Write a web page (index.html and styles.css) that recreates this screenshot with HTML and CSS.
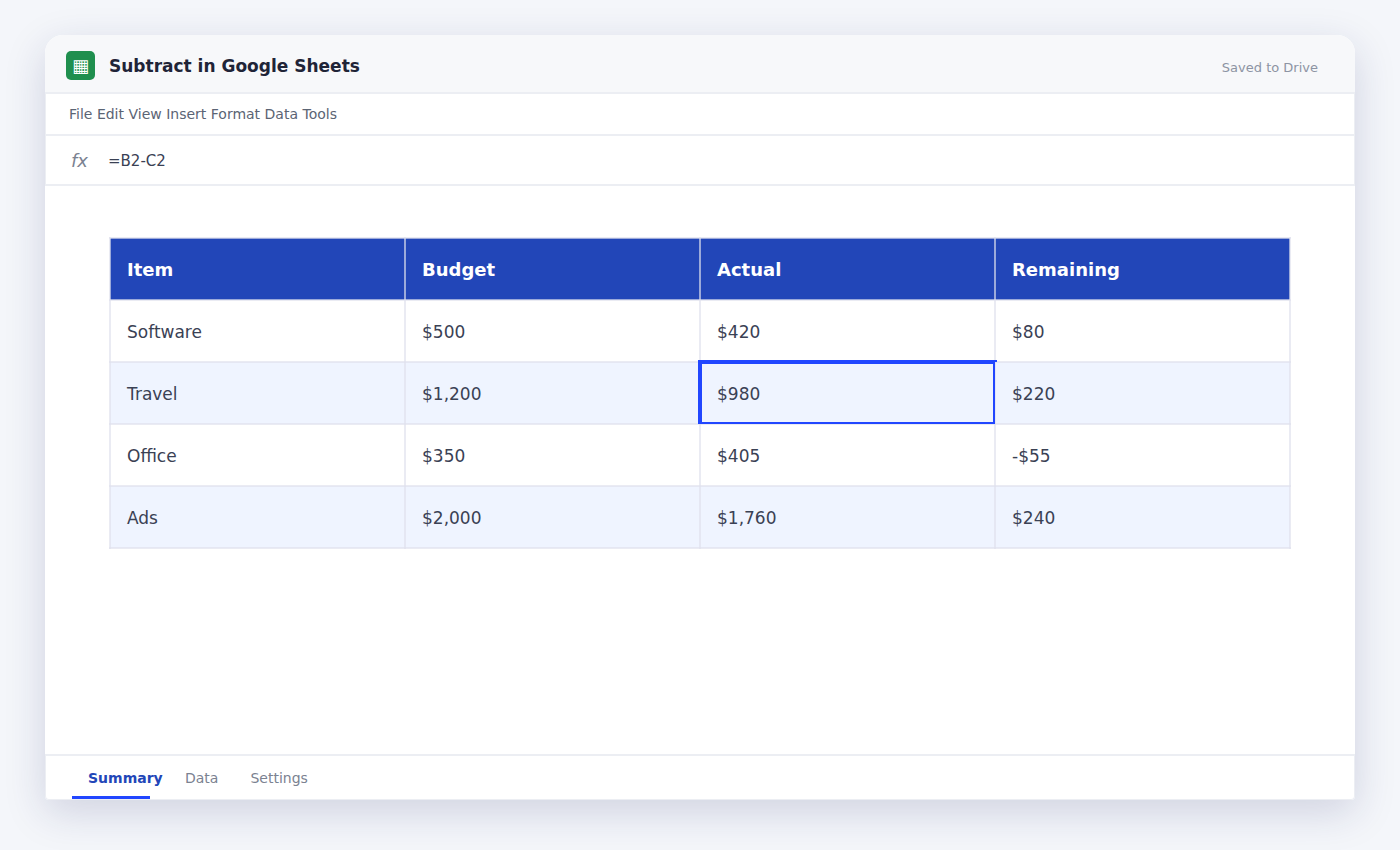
FILE: index.html
```html
<!DOCTYPE html>
<html lang="en">
<head>
    <meta charset="UTF-8">
    <meta name="viewport" content="width=device-width, initial-scale=1.0">
    <title>Subtract in Google Sheets</title>
    <link rel="stylesheet" href="styles.css">
</head>
<body>
    <div class="sheet-window">
        <!-- Title bar -->
        <header class="title-bar">
            <span class="app-icon" aria-hidden="true">▦</span>
            <h1>Subtract in Google Sheets</h1>
            <span class="save-status">Saved to Drive</span>
        </header>

        <nav class="menu-bar">
            <button>File</button>
            <button>Edit</button>
            <button>View</button>
            <button>Insert</button>
            <button>Format</button>
            <button>Data</button>
            <button>Tools</button>
        </nav>

        <div class="formula-bar">
            <label for="formula">fx</label>
            <input type="text" id="formula" value="=B2-C2">
        </div>

        <!-- Sheet -->
        <main class="sheet-content">
            <table class="sheet-table">
                <thead>
                    <tr>
                        <th>Item</th>
                        <th>Budget</th>
                        <th>Actual</th>
                        <th>Remaining</th>
                    </tr>
                </thead>
                <tbody>
                    <tr>
                        <td>Software</td>
                        <td>$500</td>
                        <td>$420</td>
                        <td>$80</td>
                    </tr>
                    <tr>
                        <td>Travel</td>
                        <td>$1,200</td>
                        <td class="selected">$980</td>
                        <td>$220</td>
                    </tr>
                    <tr>
                        <td>Office</td>
                        <td>$350</td>
                        <td>$405</td>
                        <td>-$55</td>
                    </tr>
                    <tr>
                        <td>Ads</td>
                        <td>$2,000</td>
                        <td>$1,760</td>
                        <td>$240</td>
                    </tr>
                </tbody>
            </table>
        </main>

        <!-- Sheet tabs -->
        <footer class="sheet-tabs">
            <button class="tab active">Summary</button>
            <button class="tab">Data</button>
            <button class="tab">Settings</button>
        </footer>
    </div>
</body>
</html>
```
FILE: styles.css
```css
* {
    box-sizing: border-box;
}

body {
    margin: 0;
    padding: 35px 45px 50px;
    min-height: 100vh;
    display: flex;
    background-color: #f4f6fa;
    font-family: "DejaVu Sans", sans-serif;
    color: #3a4154;
}

button,
input {
    font-family: inherit;
    color: inherit;
    background: none;
    border: none;
    padding: 0;
}

button {
    cursor: pointer;
}

.sheet-window {
    flex: 1;
    display: flex;
    flex-direction: column;
    background-color: #fff;
    border-radius: 18px 18px 4px 4px;
    box-shadow: 0 12px 40px rgba(30, 38, 100, 0.17);
}

.title-bar {
    display: flex;
    align-items: center;
    height: 59px;
    padding: 4px 37px 0 21px;
    background-color: #f7f8fa;
    border-bottom: 2px solid #eceef3;
    border-radius: 18px 18px 0 0;
}

.app-icon {
    width: 29px;
    height: 29px;
    margin-right: 14px;
    border-radius: 5px;
    background-color: #1f8f4e;
    color: #fff;
    font-size: 18px;
    line-height: 30px;
    text-align: center;
}

.title-bar h1 {
    flex: 1;
    margin: 0;
    font-size: 17px;
    color: #1f2437;
}

.save-status {
    font-size: 13px;
    line-height: 20px;
    padding-top: 4px;
    color: #8d94a3;
}

.menu-bar {
    height: 42px;
    padding: 0 23px;
    border: 1px solid #eceef3;
    border-width: 0 1px 2px;
    font-size: 14px;
    line-height: 40px;
}

.menu-bar button {
    font-size: 14px;
    color: #5b6474;
}

.formula-bar {
    display: flex;
    align-items: center;
    height: 50px;
    padding: 0 25px;
    border: 1px solid #eceef3;
    border-width: 0 1px 2px;
}

.formula-bar label {
    width: 37px;
    font-size: 18px;
    font-style: italic;
    color: #7b8291;
}

.formula-bar input {
    flex: 1;
    padding-top: 2px;
    font-size: 15px;
    outline: none;
}

.sheet-content {
    flex: 1;
    padding: 51px 64px;
}

.sheet-table {
    width: 100%;
    table-layout: fixed;
    border-collapse: collapse;
    font-size: 17px;
}

.sheet-table th,
.sheet-table td {
    height: 62px;
    padding: 2px 16px 0;
    border: 2px solid rgba(222, 225, 236, 0.65);
    text-align: left;
}

.sheet-table th {
    padding-top: 0;
    background-color: #2246b8;
    color: #fff;
    font-size: 18px;
}

.sheet-table tbody tr:nth-child(even) td {
    background-color: #eff4ff;
}

/* Selection outline sits over the cell borders */
.sheet-table .selected {
    position: relative;
}

.sheet-table .selected::after {
    content: "";
    position: absolute;
    top: -3px;
    right: -1px;
    bottom: -1px;
    left: -3px;
    border: 2px solid #2146ff;
    border-width: 4px 2px 2px 4px;
}

.sheet-table .selected::before {
    content: "";
    position: absolute;
    top: -3px;
    right: -3px;
    left: -3px;
    height: 2px;
    background-color: #2146ff;
}

.sheet-tabs {
    display: flex;
    height: 46px;
    padding: 0 26px;
    border: 1px solid #eceef3;
    border-width: 2px 1px 1px;
    border-radius: 0 0 4px 4px;
}

.tab {
    margin-right: 32px;
    font-size: 14px;
    color: #7b8291;
}

.tab.active {
    width: 78px;
    margin-right: 35px;
    padding: 3px 0 0 16px;
    border-bottom: 3px solid #2146ff;
    font-weight: bold;
    color: #2246b8;
}
```
